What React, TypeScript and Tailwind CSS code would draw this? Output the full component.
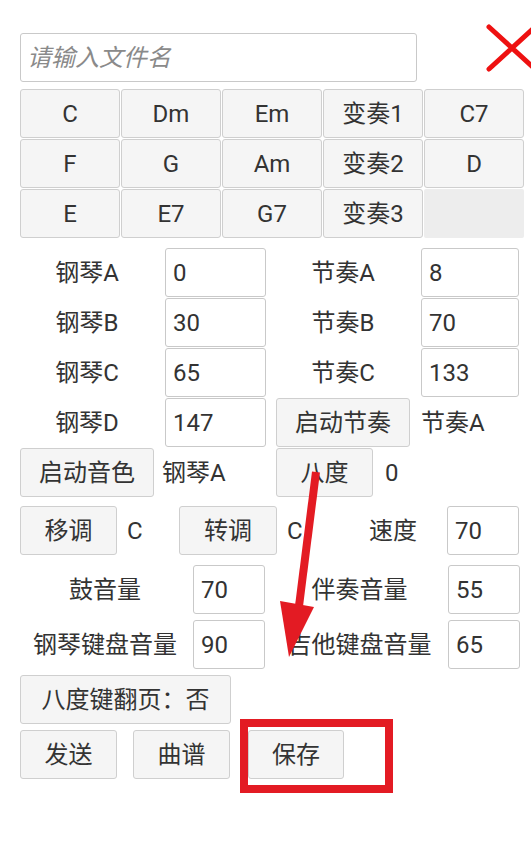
import React from 'react';

const btn =
  'flex h-[49px] shrink-0 items-center justify-center rounded-[3px] border border-[#cfcfcf] bg-[#f5f5f5] text-[#333]';
const field =
  'h-[49px] shrink-0 rounded-[3px] border border-[#c9c9c9] bg-white px-[7px] text-[24px] text-[#333] outline-none';

function Btn({ w, children }: { w: string; children?: React.ReactNode }) {
  return <div className={`${btn} ${w}`}>{children}</div>;
}

function Field({ w, value }: { w: string; value: string }) {
  return <input className={`${field} ${w}`} defaultValue={value} />;
}

const chords = ['C', 'Dm', 'Em', '变奏1', 'C7', 'F', 'G', 'Am', '变奏2', 'D', 'E', 'E7', 'G7', '变奏3'];

const pianoRows = [
  { l: '钢琴A', v: '0', r: '节奏A', rv: '8' },
  { l: '钢琴B', v: '30', r: '节奏B', rv: '70' },
  { l: '钢琴C', v: '65', r: '节奏C', rv: '133' },
];

export default function App() {
  return (
    <div className="relative h-[843px] w-[531px] overflow-hidden bg-white pl-[20px] pt-[33px] font-['Roboto','Noto_Sans_CJK_SC',sans-serif] text-[24px] leading-none text-[#333]">
      {/* file name + close */}
      <div className="flex items-start">
        <input
          className="h-[49px] w-[397px] shrink-0 rounded-[3px] border border-[#c9c9c9] bg-white px-[6px] text-[24px] outline-none placeholder:italic placeholder:text-[#8a8a8a]"
          placeholder="请输入文件名"
        />
        <svg className="ml-[69px] mt-[-9px] shrink-0" width="52" height="48" viewBox="0 0 52 48">
          <path d="M3 3 L50 46 M3 45 L50 2" stroke="#ee1111" strokeWidth="5" strokeLinecap="round" />
        </svg>
      </div>

      {/* chord grid */}
      <div className="mt-[7px] grid w-[504px] grid-cols-5 gap-[1px]">
        {chords.map((c) => (
          <Btn key={c} w="w-full">
            {c}
          </Btn>
        ))}
        <div className="h-[49px] rounded-[2px] bg-[#ededed]" />
      </div>

      {/* piano / rhythm */}
      <div className="mt-[10px] flex flex-col gap-[1px]">
        {pianoRows.map((r) => (
          <div key={r.l} className="flex h-[49px] items-center">
            <span className="w-[134px] text-center">{r.l}</span>
            <div className="ml-[11px]">
              <Field w="w-[101px]" value={r.v} />
            </div>
            <span className="ml-[10px] w-[134px] text-center">{r.r}</span>
            <div className="ml-[11px]">
              <Field w="w-[98px]" value={r.rv} />
            </div>
          </div>
        ))}
        <div className="flex h-[49px] items-center">
          <span className="w-[134px] text-center">钢琴D</span>
          <div className="ml-[11px]">
            <Field w="w-[101px]" value="147" />
          </div>
          <div className="ml-[10px]">
            <Btn w="w-[134px]">启动节奏</Btn>
          </div>
          <span className="ml-[11px]">节奏A</span>
        </div>
        <div className="flex h-[49px] items-center">
          <Btn w="w-[134px]">启动音色</Btn>
          <span className="ml-[8px] w-[114px]">钢琴A</span>
          <Btn w="w-[97px]">八度</Btn>
          <span className="ml-[12px]">0</span>
        </div>
      </div>

      {/* transpose / tempo */}
      <div className="mt-[9px] flex h-[49px] items-center">
        <Btn w="w-[97px]">移调</Btn>
        <span className="ml-[10px] w-[52px]">C</span>
        <Btn w="w-[98px]">转调</Btn>
        <span className="ml-[10px] w-[82px]">C</span>
        <span className="w-[48px]">速度</span>
        <div className="ml-[30px]">
          <Field w="w-[72px]" value="70" />
        </div>
      </div>

      {/* volumes */}
      <div className="mt-[10px] flex h-[49px] items-center">
        <span className="w-[170px] text-center">鼓音量</span>
        <div className="ml-[3px]">
          <Field w="w-[72px]" value="70" />
        </div>
        <span className="ml-[6px] w-[177px] text-center">伴奏音量</span>
        <Field w="w-[72px]" value="55" />
      </div>
      <div className="mt-[6px] flex h-[49px] items-center">
        <span className="w-[170px] text-center">钢琴键盘音量</span>
        <div className="ml-[3px]">
          <Field w="w-[72px]" value="90" />
        </div>
        <span className="ml-[6px] w-[177px] text-center">吉他键盘音量</span>
        <Field w="w-[72px]" value="65" />
      </div>

      <div className="mt-[6px] flex">
        <Btn w="w-[211px]">八度键翻页：否</Btn>
      </div>

      <div className="mt-[6px] flex">
        <Btn w="w-[97px]">发送</Btn>
        <div className="ml-[16px]">
          <Btn w="w-[97px]">曲谱</Btn>
        </div>
        <div className="ml-[18px]">
          <Btn w="w-[96px]">保存</Btn>
        </div>
      </div>

      {/* annotations */}
      <svg className="pointer-events-none absolute left-0 top-0" width="531" height="843" viewBox="0 0 531 843">
        <path d="M316 472 L299 606" stroke="#e31b23" strokeWidth="8" />
        <polygon points="280,601 314,607 289,657" fill="#e31b23" />
      </svg>
      <div className="pointer-events-none absolute left-[240px] top-[719px] h-[74px] w-[153px] border-[8px] border-[#e31b23]" />
    </div>
  );
}
